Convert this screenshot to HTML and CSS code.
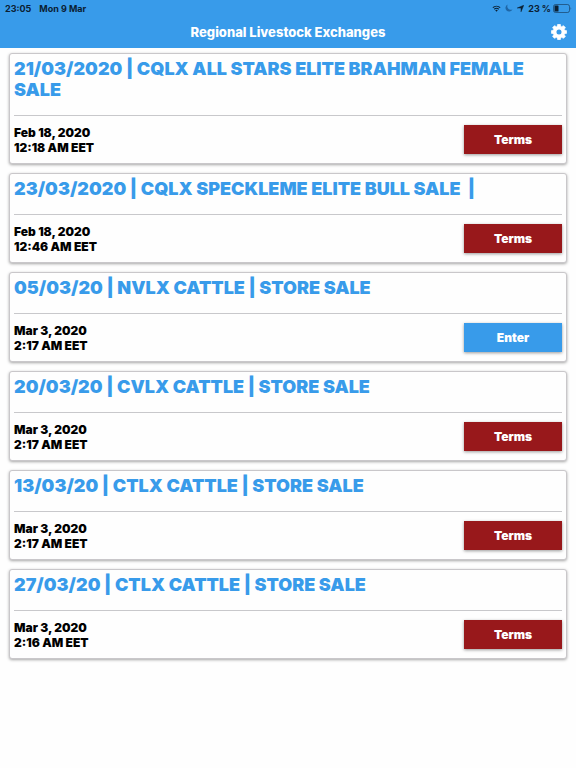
FILE: index.html
```
<!DOCTYPE html>
<html lang="en">
<head>
<meta charset="utf-8">
<meta name="viewport" content="width=device-width, initial-scale=1">
<title>Regional Livestock Exchanges</title>
<link rel="stylesheet" href="styles.css">
</head>
<body>
<header class="top">
  <div class="status">
    <span>23:05</span>
    <span>Mon 9 Mar</span>
    <div class="indicators">
      <svg class="wifi" viewBox="0 0 16 12" aria-hidden="true"><path d="M1.500 4.500a9.500 9.500 0 0 1 13 0M4 7.300a6 6 0 0 1 8 0" fill="none" stroke="currentColor" stroke-width="2"/><path d="M5.700 9.200a3.400 3.400 0 0 1 4.600 0L8 11.700z" fill="currentColor"/></svg>
      <svg class="moon" viewBox="0 0 16 16" aria-hidden="true"><path d="M5.500 1A7.300 7.300 0 1 0 15 10.500 7 7 0 0 1 5.500 1z" fill="currentColor"/></svg>
      <svg class="arrow" viewBox="0 0 14 14" aria-hidden="true"><path d="M13.500.5L8 13.500V6H.5z" fill="currentColor" stroke="currentColor"/></svg>
      <span class="charge">23 %</span>
      <svg class="battery" viewBox="0 0 38 18" aria-hidden="true"><rect x="1" y="1" width="32" height="16" rx="4" fill="none" stroke="currentColor" stroke-width="2" opacity=".5"/><rect x="3" y="3" width="8" height="12" rx="1" fill="currentColor"/><path d="M35 6q3 3 0 6z" fill="currentColor" opacity=".5"/></svg>
    </div>
  </div>
  <div class="bar">
    <h1>Regional Livestock Exchanges</h1>
    <button class="settings" type="button" aria-label="Settings">
      <svg viewBox="-12 -12 24 24" aria-hidden="true">
        <defs><path id="tooth" d="M-3-7L-2-11.500H2L3-7z"/></defs>
        <g fill="currentColor" stroke="currentColor" stroke-linejoin="round">
          <use href="#tooth"/><use href="#tooth" transform="rotate(45)"/><use href="#tooth" transform="rotate(90)"/><use href="#tooth" transform="rotate(135)"/><use href="#tooth" transform="rotate(180)"/><use href="#tooth" transform="rotate(225)"/><use href="#tooth" transform="rotate(270)"/><use href="#tooth" transform="rotate(315)"/>
        </g>
        <circle r="6.300" fill="none" stroke="currentColor" stroke-width="5"/>
      </svg>
    </button>
  </div>
</header>
<main class="list">
  <article class="card">
    <h2>21/03/2020 | CQLX ALL STARS ELITE BRAHMAN FEMALE SALE</h2>
    <div class="row"><p>Feb 18, 2020<br>12:18 AM EET</p><button class="action terms" type="button">Terms</button></div>
  </article>
  <article class="card">
    <h2>23/03/2020 | CQLX SPECKLEME ELITE BULL SALE&nbsp; |</h2>
    <div class="row"><p>Feb 18, 2020<br>12:46 AM EET</p><button class="action terms" type="button">Terms</button></div>
  </article>
  <article class="card">
    <h2>05/03/20 | NVLX CATTLE | STORE SALE</h2>
    <div class="row"><p>Mar 3, 2020<br>2:17 AM EET</p><button class="action enter" type="button">Enter</button></div>
  </article>
  <article class="card">
    <h2>20/03/20 | CVLX CATTLE | STORE SALE</h2>
    <div class="row"><p>Mar 3, 2020<br>2:17 AM EET</p><button class="action terms" type="button">Terms</button></div>
  </article>
  <article class="card">
    <h2>13/03/20 | CTLX CATTLE | STORE SALE</h2>
    <div class="row"><p>Mar 3, 2020<br>2:17 AM EET</p><button class="action terms" type="button">Terms</button></div>
  </article>
  <article class="card">
    <h2>27/03/20 | CTLX CATTLE | STORE SALE</h2>
    <div class="row"><p>Mar 3, 2020<br>2:16 AM EET</p><button class="action terms" type="button">Terms</button></div>
  </article>
</main>
</body>
</html>
```
FILE: styles.css
```
* { box-sizing: border-box; }
body {
  margin: 0;
  background: #fefefe;
  color: #000;
  font-family: Inter, "Liberation Sans", sans-serif;
}
h1, h2, p { margin: 0; }
button {
  border: 0;
  font: inherit;
  color: #fff;
  cursor: pointer;
}
.top { background: #389bea; }
.status {
  display: flex;
  align-items: center;
  gap: 8px;
  height: 16px;
  padding: 0 4px 0 5px;
  font-size: 9px;
  font-weight: 700;
  color: #0b2033;
}
.indicators {
  display: flex;
  align-items: center;
  gap: 4px;
  margin-left: auto;
}
.wifi { width: 9px; height: 7px; }
.moon { width: 8px; height: 8px; color: #1f66a6; }
.arrow { width: 7px; height: 7px; }
.battery { width: 19px; height: 9px; margin-left: -2px; }
.bar {
  display: grid;
  grid-template-columns: 1fr auto 1fr;
  align-items: center;
  height: 32px;
  padding: 0 9px;
  color: #fff;
}
.bar h1 {
  grid-column: 2;
  font-size: 13px;
  line-height: 16px;
  font-weight: 800;
}
.settings {
  justify-self: end;
  width: 16px;
  height: 16px;
  padding: 0;
  background: none;
}
.settings svg { display: block; }
.list {
  display: flex;
  flex-direction: column;
  gap: 9px;
  padding: 5px 9px;
}
.card {
  padding: 4px;
  border: 1px solid #c9c7ca;
  border-radius: 3px;
  background: #fefefe;
  box-shadow: 0 1px 3px rgba(0, 0, 0, .35);
}
.card h2 {
  padding-bottom: 15px;
  border-bottom: 1px solid #c8c8cb;
  font-size: 18px;
  line-height: 21px;
  font-weight: 900;
  color: #389bea;
}
.row {
  display: flex;
  justify-content: space-between;
  align-items: center;
  height: 43px;
  padding-top: 4px;
}
.row p {
  font-size: 12px;
  line-height: 15px;
  font-weight: 900;
}
.action {
  width: 98px;
  height: 29px;
  padding: 0;
  font-size: 12px;
  font-weight: 900;
  box-shadow: 0 1px 3px rgba(0, 0, 0, .4);
}
.terms { background: #98181b; }
.enter { background: #389bea; }
```
